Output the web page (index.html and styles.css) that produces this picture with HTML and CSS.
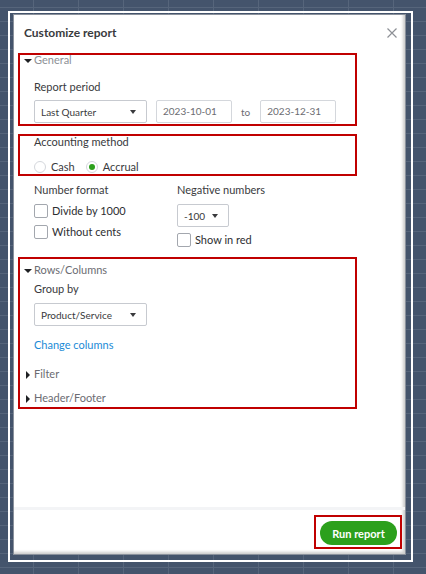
FILE: index.html
```html
<!DOCTYPE html>
<html lang="en">
<head>
  <meta charset="UTF-8">
  <meta name="viewport" content="width=device-width, initial-scale=1.0">
  <title>Customize report</title>
  <link rel="stylesheet" href="styles.css">
</head>
<body>
  <div class="frame">
    <div class="modal">
      <div class="modal-header">
        <h2 class="title">Customize report</h2>
        <svg class="close" viewBox="0 0 10 10">
          <path d="M0.5 0.5 L9.5 9.5 M9.5 0.5 L0.5 9.5" stroke="#8d9096" stroke-width="1.2" fill="none"/>
        </svg>
      </div>

      <div class="modal-body">
        <section class="mark general">
          <div class="toggle open light">General</div>
          <div class="label">Report period</div>
          <div class="period-row">
            <div class="select wide">Last Quarter <span class="caret"></span></div>
            <div class="date first">2023-10-01</div>
            <span class="to">to</span>
            <div class="date">2023-12-31</div>
          </div>
        </section>

        <section class="mark accounting">
          <div class="label">Accounting method</div>
          <div class="radios">
            <span class="radio"></span><span class="radio-text">Cash</span>
            <span class="radio on"></span><span class="radio-text">Accrual</span>
          </div>
        </section>

        <div class="options">
          <div class="option-col">
            <div class="label">Number format</div>
            <div class="check"><span class="box"></span>Divide by 1000</div>
            <div class="check"><span class="box"></span>Without cents</div>
          </div>
          <div class="option-col">
            <div class="label">Negative numbers</div>
            <div class="select narrow">-100 <span class="caret"></span></div>
            <div class="check red-check"><span class="box"></span>Show in red</div>
          </div>
        </div>

        <section class="mark rows">
          <div class="toggle open">Rows/Columns</div>
          <div class="label">Group by</div>
          <div class="select wide">Product/Service <span class="caret"></span></div>
          <div class="link">Change columns</div>
          <div class="toggle closed filter">Filter</div>
          <div class="toggle closed header-footer">Header/Footer</div>
        </section>
      </div>

      <div class="modal-footer">
        <div class="run-wrap">
          <button class="run">Run report</button>
        </div>
      </div>
    </div>
  </div>
</body>
</html>
```

FILE: styles.css
```css
html, body {
  margin: 0;
  height: 574px;
  overflow: hidden;
}
body {
  box-sizing: border-box;
  padding: 11px 0 0 8px;
  background-color: #44546c;
  background-image: linear-gradient(90deg, #56657b 1px, transparent 1px), linear-gradient(#56657b 1px, transparent 1px);
  background-size: 45px 14px;
  background-position: 33px 7px;
  font-family: Lato, "Open Sans", sans-serif;
}
.frame {
  width: 405px;
  height: 551px;
  box-sizing: border-box;
  border: 2px solid #fff;
  padding: 1px 5px 5px 3px;
  display: flex;
}
.modal {
  flex: 1;
  display: flex;
  flex-direction: column;
  background: #fff;
  border: 1px solid #8a919c;
  box-shadow: inset -2px -2px 3px rgba(0, 0, 0, 0.2);
}
.modal-header {
  height: 41px;
  box-sizing: border-box;
  padding: 10px 8px 0 10px;
  display: flex;
  justify-content: space-between;
  align-items: flex-start;
  flex-shrink: 0;
}
.title {
  margin: 0;
  font-size: 12px;
  line-height: 16px;
  font-weight: 700;
  color: #393a3d;
}
.close {
  width: 10px;
  height: 10px;
  margin-top: 3px;
}
.modal-body {
  flex: 1;
}

/* red annotation boxes */
.mark {
  position: relative;
  margin-left: 4px;
  width: 339px;
  box-sizing: border-box;
  padding-left: 16px;
}
.mark::after {
  content: "";
  position: absolute;
  inset: 0;
  border: 2px solid #c00000;
  pointer-events: none;
}

.label {
  font-size: 11px;
  line-height: 14px;
  color: #393a3d;
}
.toggle {
  position: relative;
  font-size: 11px;
  line-height: 14px;
  color: #6b6c72;
}
.toggle.light {
  color: #8d9096;
}
.toggle::before {
  content: "";
  position: absolute;
  width: 0;
  height: 0;
}
.toggle.open::before {
  left: -10px;
  top: 6px;
  border-left: 4px solid transparent;
  border-right: 4px solid transparent;
  border-top: 4px solid #1f2023;
}
.toggle.closed::before {
  left: -8px;
  top: 4px;
  border-top: 4px solid transparent;
  border-bottom: 4px solid transparent;
  border-left: 4px solid #1f2023;
}

.general {
  padding-bottom: 3px;
}
.general .toggle {
  margin-top: -3px;
}
.general .label {
  margin-top: 13px;
}
.period-row {
  margin-top: 6px;
  display: flex;
  align-items: center;
}
.select {
  box-sizing: border-box;
  height: 23px;
  border: 1px solid #c7cad0;
  border-radius: 2px;
  display: flex;
  align-items: center;
  justify-content: space-between;
  padding: 0 10px 0 6px;
  font-size: 10px;
  color: #393a3d;
}
.select.wide {
  width: 113px;
}
.select.narrow {
  width: 52px;
}
.caret {
  width: 0;
  height: 0;
  border-left: 3px solid transparent;
  border-right: 3px solid transparent;
  border-top: 4px solid #393a3d;
}
.date {
  box-sizing: border-box;
  width: 76px;
  height: 23px;
  border: 1px solid #d4d7dc;
  border-radius: 2px;
  padding-left: 6px;
  font-size: 10px;
  line-height: 21px;
  color: #6b6c72;
  margin-left: 10px;
}
.date.first {
  margin-left: 9px;
}
.to {
  margin-left: 9px;
  font-size: 10px;
  color: #6b6c72;
}

.accounting {
  margin-top: 8px;
  height: 42px;
  padding-top: 1px;
}
.radios {
  margin-top: 11px;
  display: flex;
  align-items: center;
  font-size: 11px;
  line-height: 14px;
  color: #393a3d;
}
.radio {
  width: 12px;
  height: 12px;
  box-sizing: border-box;
  border: 1px solid #d4d7dc;
  border-radius: 50%;
  margin-right: 5px;
  display: flex;
  align-items: center;
  justify-content: center;
}
.radio.on::after {
  content: "";
  width: 6px;
  height: 6px;
  border-radius: 50%;
  background: #2ca01c;
}
.radio-text {
  margin-right: 11px;
}

.options {
  margin-top: 7px;
  padding-left: 20px;
  display: grid;
  grid-template-columns: 143px auto;
}
.options .select {
  margin-top: 7px;
}
.check {
  margin-top: 7px;
  display: flex;
  align-items: center;
  font-size: 11px;
  line-height: 14px;
  color: #2d2e31;
}
.check.red-check {
  margin-top: 6px;
}
.box {
  width: 14px;
  height: 14px;
  box-sizing: border-box;
  border: 1px solid #a3a7ae;
  border-radius: 2px;
  margin-right: 4px;
}

.rows {
  margin-top: 10px;
  padding-top: 6px;
  padding-bottom: 4px;
}
.rows .label {
  margin-top: 5px;
}
.rows .select {
  margin-top: 7px;
}
.link {
  margin-top: 12px;
  font-size: 11px;
  line-height: 14px;
  color: #1a8ad6;
}
.filter {
  margin-top: 15px;
}
.header-footer {
  margin-top: 10px;
}

.modal-footer {
  flex-shrink: 0;
  height: 47px;
  box-sizing: border-box;
  border-top: 3px solid #f3f4f6;
  padding: 11px 8px 0 0;
  display: flex;
  justify-content: flex-end;
  align-items: flex-start;
}
.run-wrap {
  position: relative;
  display: flex;
}
.run-wrap::after {
  content: "";
  position: absolute;
  top: -6px;
  left: -6px;
  right: -5px;
  bottom: -4px;
  border: 2px solid #c00000;
  pointer-events: none;
}
.run {
  width: 77px;
  height: 24px;
  border: none;
  border-radius: 12px;
  background: #2ca01c;
  color: #fff;
  font-family: Lato, "Open Sans", sans-serif;
  font-size: 11px;
  font-weight: 700;
  padding: 0;
}
```
